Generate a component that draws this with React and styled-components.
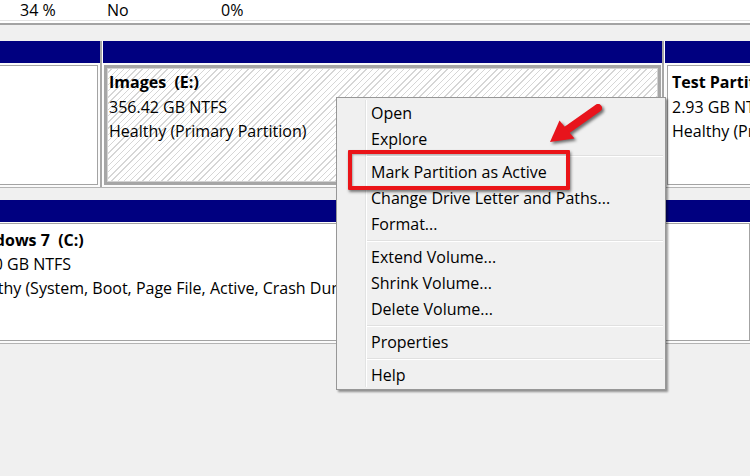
import React from "react";
import styled, { createGlobalStyle } from "styled-components";

const GlobalStyle = createGlobalStyle`
  html, body {
    margin: 0;
    padding: 0;
  }
  body {
    width: 750px;
    height: 476px;
    overflow: hidden;
    background: #f0f0f0;
    font-family: "Open Sans", "Liberation Sans", sans-serif;
    color: #000;
  }
`;

const Screen = styled.div`
  position: relative;
  width: 750px;
  height: 476px;
  overflow: hidden;
  background: #f0f0f0;
  display: flex;
  flex-direction: column;
  font-size: 16px;
`;

const ListRow = styled.div`
  box-sizing: border-box;
  height: 20px;
  padding: 1px 0 0 20px;
  background: #fff;
  display: grid;
  grid-template-columns: 87px 114px 1fr;
  line-height: 19px;
`;

const ListDivider = styled.div`
  box-sizing: border-box;
  height: 5px;
  background: #fff;
  border-top: 1px solid #e3e3e3;
  border-bottom: 2px solid #a3a3a3;
`;

const DiskArea = styled.div`
  display: flex;
  flex-direction: column;
  padding-top: 16px;
`;

const DiskGroup = styled.div`
  display: flex;
  height: ${(p) => p.$height}px;
  border-bottom: 1px solid #b4b4b4;
  margin-bottom: ${(p) => p.$gap || 0}px;
`;

const Volume = styled.div`
  display: flex;
  flex-direction: column;
  flex: ${(p) => (p.$width ? "none" : "1 0 auto")};
  width: ${(p) => (p.$width ? `${p.$width}px` : "auto")};
  margin-left: ${(p) => (p.$first ? "-4px" : "0")};
  border-left: 1px solid #fff;
  border-right: ${(p) => (p.$last ? "none" : "2px solid #a7a7a7")};
  background: #fff;
`;

const NavyBar = styled.div`
  height: 22px;
  flex: none;
  background: #000080;
`;

const VolumeBody = styled.div`
  flex: 1;
  display: flex;
  padding: ${(p) => p.$pad || "2px 2px 2px 2px"};
  background: #fbfbfb;
`;

const VolumeBox = styled.div`
  box-sizing: border-box;
  flex: 1;
  overflow: hidden;
  white-space: pre;
  line-height: ${(p) => p.$lh || 24.5}px;
  ${(p) =>
    p.$selected
      ? `
    border: 3px solid #a6a6a6;
    box-shadow: inset 0 0 0 1px #d2d2d2;
    padding: 2px 2px;
    background: repeating-linear-gradient(135deg, #fff 0 3.4px, #d6d6d6 3.4px 4.4px);
  `
      : `
    border: 1px solid #a3a3a3;
    padding: ${p.$pad || "4px 4px"};
    background: #fff;
  `}
`;

const Shifted = styled.div`
  margin-left: ${(p) => p.$shift}px;
`;

const VolumeTitle = styled.div`
  font-weight: 700;
`;

const VolumeLine = styled.div`
  margin-left: ${(p) => p.$nudge || 0}px;
`;

const ContextMenu = styled.div`
  position: absolute;
  left: 336px;
  top: 97px;
  width: 330px;
  box-sizing: border-box;
  padding: 2px 0 1px;
  background-color: #f0f0f0;
  background-image: linear-gradient(
    to right,
    transparent 28px,
    #e2e3e3 28px 29px,
    #ffffff 29px 30px,
    transparent 30px
  );
  background-repeat: no-repeat;
  background-size: 100% calc(100% - 4px);
  background-position: 0 2px;
  border: 1px solid #979797;
  box-shadow: 2px 2px 2px rgba(0, 0, 0, 0.4);
  display: flex;
  flex-direction: column;
`;

const MenuItem = styled.div`
  height: 26px;
  line-height: 26px;
  padding-left: 34px;
  white-space: nowrap;
`;

const MenuSeparator = styled.div`
  margin: 3px 2px 2px 30px;
  border-top: 1px solid #e0e0e0;
  border-bottom: 1px solid #fff;
`;

const Highlight = styled.div`
  position: absolute;
  left: 11px;
  top: 52px;
  width: 222px;
  height: 40px;
  box-sizing: border-box;
  border: 4px solid #ea1418;
  border-radius: 1px;
  box-shadow: 1px 2px 3px rgba(0, 0, 0, 0.5), inset 1px 1px 2px rgba(0, 0, 0, 0.3);
`;

const Arrow = styled.svg`
  position: absolute;
  left: 208px;
  top: 2px;
  overflow: visible;
  filter: drop-shadow(2px 2px 1.5px rgba(0, 0, 0, 0.55));
`;

const menuGroups = [
  ["Open", "Explore"],
  ["Mark Partition as Active", "Change Drive Letter and Paths...", "Format..."],
  ["Extend Volume...", "Shrink Volume...", "Delete Volume..."],
  ["Properties"],
  ["Help"],
];

const App = () => {
  return (
    <>
      <GlobalStyle />
      <Screen>
        <ListRow>
          <span>34 %</span>
          <span>No</span>
          <span>0%</span>
        </ListRow>
        <ListDivider />

        <DiskArea>
          <DiskGroup $height={146} $gap={12}>
            <Volume $width={103} $first>
              <NavyBar />
              <VolumeBody>
                <VolumeBox />
              </VolumeBody>
            </Volume>
            <Volume $width={559}>
              <NavyBar />
              <VolumeBody $pad="2px 1px 2px 1px">
                <VolumeBox $selected>
                  <VolumeTitle>{"Images  (E:)"}</VolumeTitle>
                  <div>356.42 GB NTFS</div>
                  <div>Healthy (Primary Partition)</div>
                </VolumeBox>
              </VolumeBody>
            </Volume>
            <Volume $last>
              <NavyBar />
              <VolumeBody $pad="2px 0 2px 2px">
                <VolumeBox>
                  <VolumeTitle>Test Partition</VolumeTitle>
                  <div>2.93 GB NTFS</div>
                  <div>Healthy (Primary Partition)</div>
                </VolumeBox>
              </VolumeBody>
            </Volume>
          </DiskGroup>

          <DiskGroup $height={143}>
            <Volume $first $last>
              <NavyBar />
              <VolumeBody $pad="1px 0 2px 0">
                <VolumeBox $pad="4px 4px" $lh={24}>
                  <Shifted $shift={-38}>
                    <VolumeTitle>{"Windows 7  (C:)"}</VolumeTitle>
                    <VolumeLine $nudge={-11}>120.00 GB NTFS</VolumeLine>
                    <VolumeLine>Healthy (System, Boot, Page File, Active, Crash Dump)</VolumeLine>
                  </Shifted>
                </VolumeBox>
              </VolumeBody>
            </Volume>
          </DiskGroup>
        </DiskArea>

        <ContextMenu>
          {menuGroups.map((group, gi) => (
            <React.Fragment key={gi}>
              {gi > 0 && <MenuSeparator />}
              {group.map((label) => (
                <MenuItem key={label}>{label}</MenuItem>
              ))}
            </React.Fragment>
          ))}
          <Highlight />
          <Arrow width="60" height="48" viewBox="0 0 60 48">
            <line
              x1="53"
              y1="8"
              x2="19"
              y2="32"
              stroke="#e8141c"
              strokeWidth="8"
              strokeLinecap="round"
            />
            <polygon points="5,42 14.5,20.5 29.5,38.5" fill="#e8141c" />
          </Arrow>
        </ContextMenu>
      </Screen>
    </>
  );
};

export default App;
